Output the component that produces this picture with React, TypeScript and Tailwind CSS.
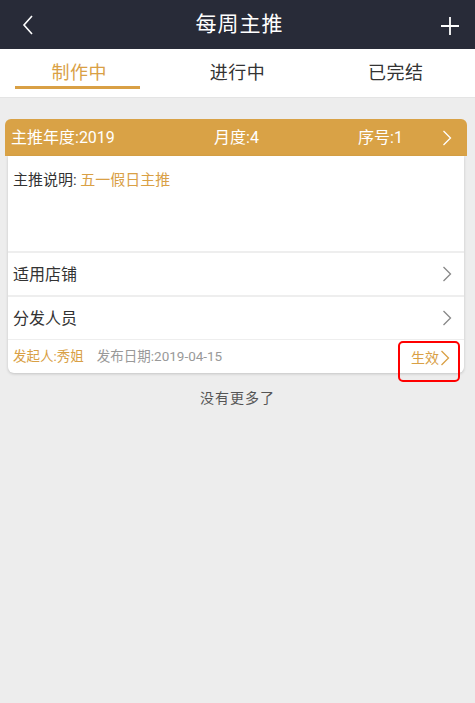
import React from 'react'

const font = { fontFamily: 'Roboto, "Noto Sans CJK SC", "Noto Sans", sans-serif' }

function Chevron({ className = '' }: { className?: string }) {
  return (
    <svg width="10" height="16" viewBox="0 0 10 16" className={className} fill="none">
      <path d="M1.5 1 L8.5 8 L1.5 15" stroke="currentColor" strokeWidth="1.3" />
    </svg>
  )
}

export default function App() {
  const tabs = ['制作中', '进行中', '已完结']

  return (
    <div className="w-[475px] h-[703px] bg-[#ededed] overflow-hidden" style={font}>
      {/* top bar */}
      <div className="h-[49px] bg-[#282b38] flex items-center justify-between px-[22px] text-white">
        <svg width="12" height="20" viewBox="0 0 12 20" fill="none">
          <path d="M10 1 L2 10 L10 19" stroke="white" strokeWidth="1.6" />
        </svg>
        <h1 className="text-[21px] leading-none tracking-[1px] ml-[4px]">每周主推</h1>
        <svg width="18" height="18" viewBox="0 0 18 18" fill="none" className="-mr-[6px] mt-[2px]">
          <path d="M9 0 V18 M0 9 H18" stroke="white" strokeWidth="1.8" />
        </svg>
      </div>

      {/* tabs */}
      <div className="h-[49px] bg-white flex border-b border-[#e4e4e4]">
        {tabs.map((t, i) => (
          <div key={t} className="flex-1 flex flex-col items-center pt-[11px]">
            <span
              className={`text-[18px] leading-[25px] tracking-[0.5px] ${
                i === 0 ? 'text-[#d9a045]' : 'text-[#333333]'
              }`}
            >
              {t}
            </span>
            {i === 0 && <div className="mt-[1px] w-[125px] h-[3px] bg-[#d9a045] -ml-[4px]" />}
          </div>
        ))}
      </div>

      {/* card */}
      <div className="mt-[21px] ml-[5px] mr-[8px]">
        <div className="h-[37px] bg-[#d9a246] rounded-t-[6px] flex items-center text-white text-[16px] pl-[6px] pr-[15px]">
          <span className="w-[203px]">主推年度:2019</span>
          <span className="w-[144px]">月度:4</span>
          <span className="flex-1">序号:1</span>
          <Chevron className="text-white" />
        </div>
        <div className="mx-[3px] bg-white rounded-b-[6px] shadow-[0_1px_3px_rgba(0,0,0,0.18)]">
          <div className="h-[95px] px-[5px] pt-[13px] text-[15px] leading-[22px]">
            <span className="text-[#333333]">主推说明: </span>
            <span className="text-[#d9a045]">五一假日主推</span>
          </div>
          <div className="h-[44px] border-t-2 border-[#eeeeee] flex items-center justify-between pl-[5px] pr-[12px] text-[16px] text-[#333333]">
            <span className="mt-[2px]">适用店铺</span>
            <Chevron className="text-[#888888]" />
          </div>
          <div className="h-[44px] border-t-2 border-[#eeeeee] flex items-center justify-between pl-[5px] pr-[12px] text-[16px] text-[#333333]">
            <span className="mt-[2px]">分发人员</span>
            <Chevron className="text-[#888888]" />
          </div>
          <div className="h-[34px] border-t border-[#eeeeee] flex items-center pl-[5px] pr-[3px] text-[13.5px] relative">
            <span className="text-[#d9a045]">发起人:秀姐</span>
            <span className="text-[#999999] ml-[13px]">发布日期:2019-04-15</span>
            <span className="ml-auto flex items-center gap-[1px] text-[#d9a045] text-[14px] mr-[11px] mt-[3px]">
              生效
              <Chevron className="text-[#d9a045]" />
            </span>
            <div className="absolute left-[390px] top-[1px] w-[62px] h-[41px] border-[2.5px] border-[#ff0000] rounded-[5px]" />
          </div>
        </div>
      </div>

      <p className="text-center text-[14px] text-[#555555] mt-[15px] tracking-[1px]">没有更多了</p>
    </div>
  )
}
